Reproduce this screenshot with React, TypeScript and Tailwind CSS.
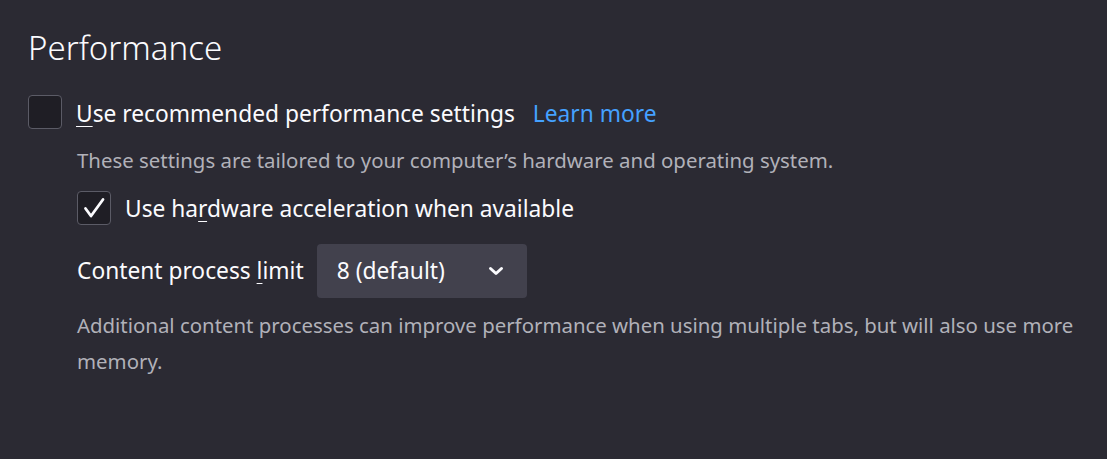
export default function App() {
  return (
    <div className="min-h-screen w-full bg-[#2b2a33] text-[#fbfbfe] font-['Noto_Sans',sans-serif] pl-[28px] pr-[28px] pt-[25px]">
      <h1 className="text-[33px] font-light leading-[46px] text-[#fbfbfe]">Performance</h1>

      <div className="mt-[24px] flex items-center">
        <div className="h-[34px] w-[34px] rounded-[4px] border border-[#5b5b66] bg-[#1f1e25]" />
        <span className="ml-[14px] pt-[2px] -mb-[2px] text-[22.75px] leading-[34px]">
          <span className="underline underline-offset-[4px] decoration-1">U</span>se recommended performance settings
        </span>
        <a className="ml-[18px] pt-[2px] -mb-[2px] text-[22.75px] leading-[34px] text-[#45a1ff]">Learn more</a>
      </div>

      <div className="pl-[49px]">
        <p className="mt-[13px] text-[20.4px] leading-[36px] text-[#b1b1b9]">
          These settings are tailored to your computer’s hardware and operating system.
        </p>

        <div className="mt-[13px] flex items-center">
          <div className="flex h-[34px] w-[34px] items-center justify-center rounded-[4px] border border-[#5b5b66] bg-[#1f1e25]">
            <svg width="24" height="24" viewBox="0 0 24 24" fill="none">
              <path d="M3.5 12.5 L9 20 L21 3.5" stroke="#fbfbfe" strokeWidth="2.8" strokeLinecap="round" strokeLinejoin="round" />
            </svg>
          </div>
          <span className="ml-[14px] pt-[1px] -mb-[1px] text-[22.75px] leading-[34px]">
            Use ha<span className="underline underline-offset-[4px] decoration-1">r</span>dware acceleration when available
          </span>
        </div>

        <div className="mt-[19px] flex items-center">
          <span className="text-[22.75px] leading-[34px]">
            Content process <span className="underline underline-offset-[4px] decoration-1">l</span>imit
          </span>
          <div className="ml-[13px] flex h-[54px] w-[210px] items-center justify-between rounded-[4px] bg-[#42414d] pl-[20px] pr-[23px]">
            <span className="text-[22.75px] leading-[34px]">8 (default)</span>
            <svg width="16" height="10" viewBox="0 0 16 10" fill="none">
              <path d="M2.5 2.5 L8 7.5 L13.5 2.5" stroke="#fbfbfe" strokeWidth="3" strokeLinecap="round" strokeLinejoin="round" />
            </svg>
          </div>
        </div>

        <p className="mt-[9px] text-[20.4px] leading-[36px] text-[#b1b1b9]">
          Additional content processes can improve performance when using multiple tabs, but will also use more memory.
        </p>
      </div>
    </div>
  );
}
